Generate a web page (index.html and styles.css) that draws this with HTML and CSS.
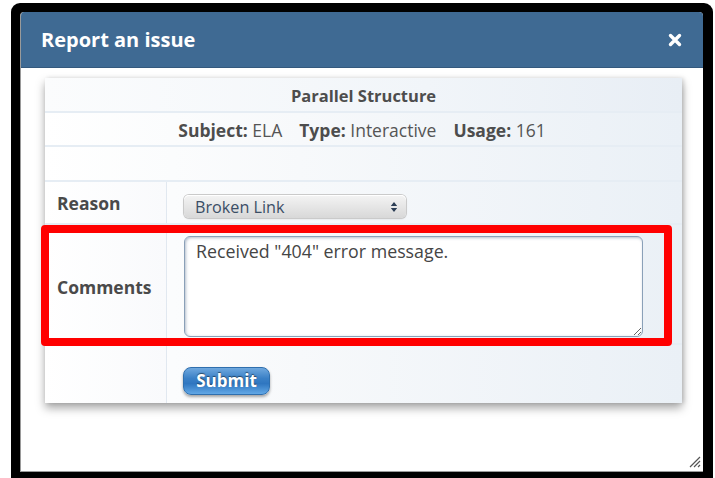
FILE: index.html
```html
<!DOCTYPE html>
<html lang="en">
<head>
<meta charset="utf-8">
<title>Report an issue</title>
<link rel="stylesheet" href="styles.css">
</head>
<body>
<div class="frame">
  <div class="dialog">
    <div class="dialog-header">
      <h1 class="dialog-title">Report an issue</h1>
      <button class="close-btn" aria-label="Close">
        <svg width="14" height="14" viewBox="0 0 14 14"><path d="M2.5 2.5 L11.5 11.5 M11.5 2.5 L2.5 11.5" stroke="#fff" stroke-width="3.4" stroke-linecap="round"/></svg>
      </button>
    </div>
    <div class="dialog-body">
      <div class="card">
        <div class="row row-title">Parallel Structure</div>
        <div class="row row-meta">
          <span><b>Subject:</b> ELA</span>
          <span><b>Type:</b> Interactive</span>
          <span><b>Usage:</b> 161</span>
        </div>
        <div class="row row-blank"></div>
        <div class="row form-row row-reason">
          <div class="label">Reason</div>
          <div class="field">
            <div class="select">
              <span>Broken Link</span>
              <svg class="select-arrows" width="8" height="12" viewBox="0 0 8 12"><path d="M4 1 L7.2 5 H0.8 Z M4 11 L7.2 7 H0.8 Z" fill="#2c3e55"/></svg>
            </div>
          </div>
        </div>
        <div class="row form-row row-comments">
          <div class="label">Comments</div>
          <div class="field">
            <textarea class="comments">Received "404" error message.</textarea>
          </div>
        </div>
        <div class="row form-row row-submit">
          <div class="label"></div>
          <div class="field">
            <button class="submit">Submit</button>
          </div>
        </div>
        <div class="highlight"></div>
      </div>
    </div>
    <svg class="grip" width="14" height="14" viewBox="0 0 14 14"><path d="M13 3 L3 13 M13 7 L7 13 M13 11 L11 13" stroke="#555" stroke-width="1.2"/></svg>
  </div>
</div>
</body>
</html>
```

FILE: styles.css
```css
html, body {
  margin: 0;
  padding: 0;
  background: #fff;
  height: 100%;
  overflow: hidden;
}

body {
  font-family: "Open Sans", "Liberation Sans", sans-serif;
  color: #4a4a4a;
}

.frame {
  margin: 3px 0 0 11px;
  width: 702px;
  height: 490px;
  box-sizing: border-box;
  padding: 9px 10px 0 9px;
  background: #000;
  border-radius: 9px 9px 0 0;
}

.dialog {
  position: relative;
  width: 683px;
  height: 460px;
  background: #fff;
  border-radius: 4px 4px 0 0;
  border-left: 1px solid #9a9a9a;
  border-bottom: 1px solid #9a9a9a;
  box-sizing: border-box;
  overflow: hidden;
}

.dialog-header {
  height: 56px;
  background: #3f6a93;
  display: flex;
  align-items: center;
  justify-content: space-between;
  padding: 0 21px 0 20px;
  border-bottom: 1px solid #34597d;
  box-sizing: border-box;
}

.dialog-title {
  margin: 0;
  font-size: 20px;
  font-weight: 700;
  color: #fff;
}

.close-btn {
  background: none;
  border: 0;
  padding: 0;
  width: 14px;
  height: 14px;
  display: flex;
}

.dialog-body {
  padding: 10px 0 0 24px;
}

.card {
  position: relative;
  width: 637px;
  background: linear-gradient(to right, #ffffff 0%, #f7f9fb 40%, #eaf0f6 100%);
  box-shadow: 0 5px 9px rgba(0, 0, 0, 0.35), 2px 0 4px rgba(0, 0, 0, 0.12);
}

.row {
  box-sizing: border-box;
  border-bottom: 2px solid #e6edf4;
}

.row-title {
  height: 35px;
  display: flex;
  align-items: center;
  justify-content: center;
  font-size: 16.5px;
  font-weight: 700;
  color: #4d4d4d;
  padding-top: 2px;
  background: linear-gradient(to right, #fbfcfd 0%, #f1f5f9 60%, #e8eef5 100%);
}

.row-meta {
  height: 34px;
  display: flex;
  align-items: center;
  justify-content: center;
  gap: 17px;
  font-size: 17.5px;
  color: #555;
  padding: 1px 3px 0 0;
}

.row-meta b {
  color: #4d4d4d;
}

.row-blank {
  height: 35px;
}

.form-row {
  display: flex;
}

.label {
  width: 122px;
  box-sizing: border-box;
  padding-left: 12px;
  display: flex;
  align-items: center;
  font-size: 17.5px;
  font-weight: 700;
  color: #4a4a4a;
  border-right: 1px solid #e1e8f0;
  background: linear-gradient(to right, #ffffff, #f9fafc);
}

.field {
  flex: 1;
  padding-left: 17px;
}

.row-reason {
  height: 43px;
}

.row-reason .label {
  padding-top: 1px;
}

.row-reason .field {
  padding-top: 13px;
}

.select {
  width: 222px;
  height: 23px;
  box-sizing: border-box;
  border-radius: 5px;
  background: linear-gradient(to bottom, #f4f4f4 0%, #d8d8d8 100%);
  box-shadow: inset 0 1px 0 #fff, 0 0 0 1px #cacaca, 0 1px 2px rgba(0, 0, 0, 0.15);
  display: flex;
  align-items: center;
  justify-content: space-between;
  padding: 0 8px 0 11px;
  font-size: 16.2px;
  color: #3b4e66;
}

.row-comments {
  height: 120px;
}

.row-comments .label {
  padding-top: 5px;
}

.row-comments .field {
  padding-top: 11px;
}

.comments {
  display: block;
  width: 459px;
  height: 101px;
  box-sizing: border-box;
  margin: 0;
  border: 1px solid #8aa0b8;
  border-radius: 6px;
  box-shadow: inset 1px 1px 3px rgba(40, 70, 110, 0.35);
  background: #fff;
  padding: 2px 11px;
  font-family: "Open Sans", "Liberation Sans", sans-serif;
  font-size: 17.8px;
  line-height: 24px;
  color: #454545;
  resize: both;
  outline: none;
}

.row-submit {
  height: 58px;
  border-bottom: 0;
}

.row-submit .field {
  padding-top: 22px;
  padding-left: 16px;
}

.submit {
  width: 87px;
  height: 28px;
  border: 1px solid #2f6fae;
  border-radius: 8px;
  background: linear-gradient(to bottom, #6fa8de 0%, #3a80c6 40%, #2f76c0 60%, #62a8e6 100%);
  box-shadow: 0 2px 3px rgba(0, 0, 0, 0.35);
  color: #fff;
  font-family: "Open Sans", "Liberation Sans", sans-serif;
  font-size: 17px;
  font-weight: 700;
  text-shadow: 0 -1px 1px rgba(0, 0, 0, 0.5);
  padding: 0 0 1px;
}

.highlight {
  position: absolute;
  left: -4px;
  top: 147px;
  width: 631px;
  height: 121px;
  box-sizing: border-box;
  border: 8px solid #ff0000;
  border-radius: 4px;
  pointer-events: none;
}

.grip {
  position: absolute;
  right: 2px;
  bottom: 3px;
}
```
